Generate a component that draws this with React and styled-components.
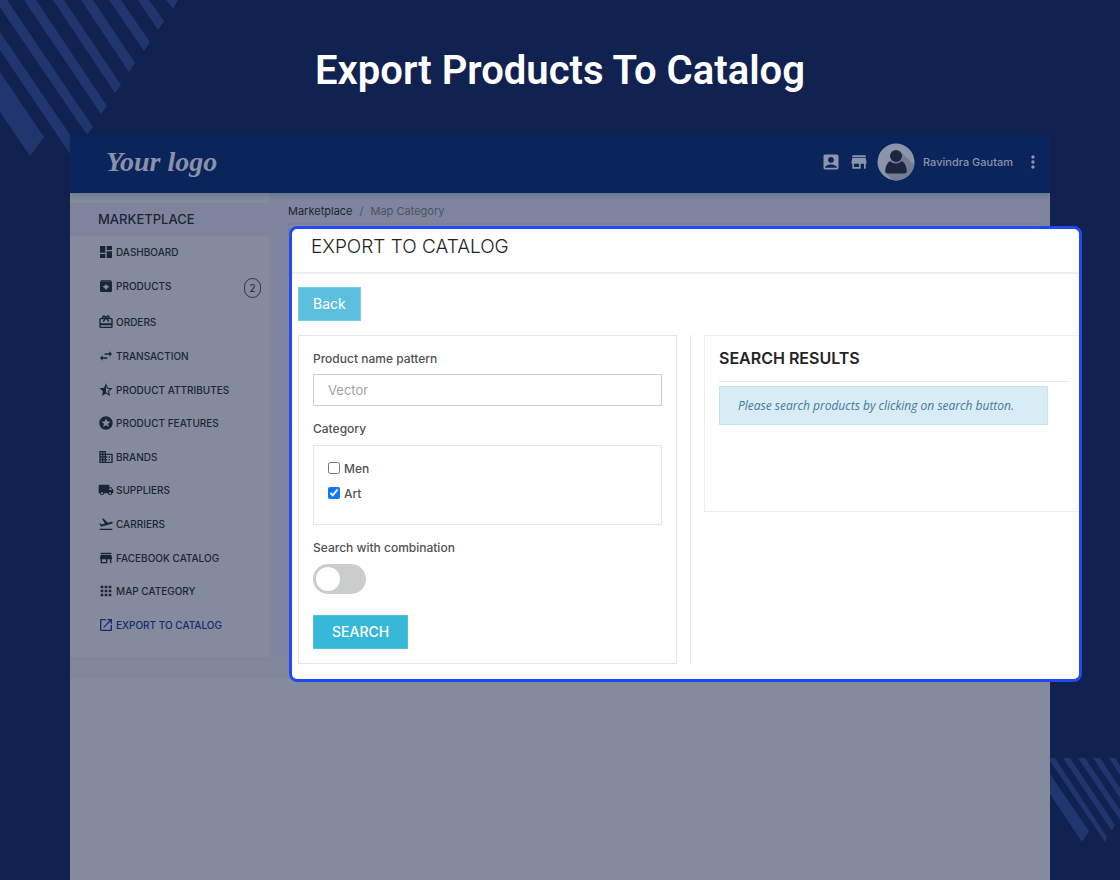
import React from 'react';
import styled, { createGlobalStyle, css } from 'styled-components';
import {
  MdAccountBox,
  MdApps,
  MdArchive,
  MdBusiness,
  MdCardGiftcard,
  MdDashboard,
  MdFlightTakeoff,
  MdLaunch,
  MdLocalShipping,
  MdMoreVert,
  MdStarHalf,
  MdStars,
  MdStore,
  MdSwapHoriz,
} from 'react-icons/md';

const GlobalStyle = createGlobalStyle`
  *, *::before, *::after { box-sizing: border-box; }
  body {
    margin: 0;
    background: #112150;
    color: #1c2438;
    font-family: Inter, "Open Sans", sans-serif;
  }
  button, input { font-family: inherit; }
`;

const Stage = styled.div`
  position: relative;
  display: flex;
  flex-direction: column;
  min-height: 100vh;
  padding: 0 70px;
  overflow: hidden;
`;

const TopStripes = styled.svg`
  position: absolute;
  top: 0;
  left: 0;
  fill: #21366e;
`;

const BottomStripes = styled.svg`
  position: absolute;
  right: 0;
  bottom: 38px;
  fill: #21366e;
`;

const PageTitle = styled.h1`
  margin: 0;
  padding: 47px 0 40px;
  color: #fff;
  font-family: Roboto, sans-serif;
  font-size: 40px;
  font-weight: 600;
  line-height: 48px;
  text-align: center;
`;

const Shop = styled.div`
  position: relative;
  flex: 1;
  display: flex;
  flex-direction: column;
  background: #838b9d;
`;

const Header = styled.header`
  position: relative;
  display: flex;
  align-items: center;
  height: 58px;
  padding: 0 7px 4px 36px;
  background: #0a245c;
  color: #8c95ac;
  box-shadow: 0 2px 6px rgba(20, 30, 60, 0.2);
`;

const Logo = styled.a`
  margin-right: auto;
  color: #8a92a8;
  font-family: "Liberation Serif", serif;
  font-size: 28px;
  font-style: italic;
  font-weight: 700;
  line-height: 40px;
  text-decoration: none;
`;

const HeaderLink = styled.a`
  display: flex;
  margin-right: 8px;
  color: inherit;
  font-size: 20px;
`;

const Account = styled.a`
  display: flex;
  align-items: center;
  gap: 8px;
  color: inherit;
  font-size: 11px;
  font-weight: 500;
  text-decoration: none;
`;

const MoreButton = styled.button`
  display: flex;
  margin-left: 10px;
  padding: 0;
  border: 0;
  background: none;
  color: inherit;
  font-size: 20px;
`;

const Columns = styled.div`
  display: grid;
  grid-template-columns: 199px minmax(0, 1fr);
  padding-bottom: 22px;
  background: linear-gradient(#7e859d 0 468px, #80879b 468px);
`;

const Sidebar = styled.nav`
  min-height: 464px;
  padding-top: 10px;
  background: #838b9d;
`;

const SidebarTitle = styled.h2`
  margin: 0;
  padding-left: 28px;
  background: #7d849c;
  font-size: 13px;
  font-weight: 500;
  line-height: 33px;
`;

const MenuList = styled.ul`
  display: flex;
  flex-direction: column;
  justify-content: space-between;
  min-height: 393px;
  margin: 6px 0 0;
  padding: 0 8px 0 28px;
  list-style: none;
`;

const MenuItem = styled.li`
  display: flex;
  justify-content: space-between;
  height: ${(p) => (p.$tall ? 23 : 20)}px;
`;

const MenuLink = styled.a`
  display: flex;
  align-items: center;
  gap: 2px;
  height: 20px;
  color: ${(p) => (p.$active ? '#142c6e' : '#1c2438')};
  font-size: 10px;
  font-weight: 500;
  line-height: 20px;
  text-decoration: none;
  white-space: nowrap;

  svg { font-size: 16px; }
`;

const Badge = styled.span`
  width: 17px;
  height: 20px;
  margin-top: 2px;
  border: 1px solid #2b3348;
  border-radius: 9px;
  font-size: 10px;
  line-height: 18px;
  text-align: center;
`;

const Content = styled.div`
  padding: 11px 6px 0 19px;
`;

const Breadcrumb = styled.nav`
  display: flex;
  gap: 7px;
  padding-bottom: 4px;
  color: #4b5268;
  font-size: 11px;
  line-height: 15px;

  a {
    color: #1c2438;
    text-decoration: none;
  }
`;

const CardBack = styled.div`
  height: 20px;
  border: 2px solid #7a8195;
  background: #838b9d;
`;

const Panel = styled.section`
  position: absolute;
  top: 91px;
  right: -32px;
  left: 219px;
  overflow: hidden;
  padding-bottom: 15px;
  border: 3px solid #2149f3;
  border-radius: 8px;
  background: #fff;
`;

const PanelTitle = styled.h2`
  margin: 0;
  padding: 5px 0 12px 19px;
  border-bottom: 2px solid #eee;
  color: #232425;
  font-size: 19px;
  font-weight: 300;
  line-height: 26px;
`;

const PanelBody = styled.div`
  padding: 13px 0 0 6px;
`;

const Button = styled.button`
  display: block;
  height: 34px;
  padding: 0 ${(p) => (p.$primary ? 18 : 14)}px 2px;
  border: 1px solid ${(p) => (p.$primary ? '#4cc0dc' : '#7acce4')};
  background: ${(p) => (p.$primary ? '#36b8d8' : '#5bc0de')};
  color: #fff;
  font-size: 14px;
  font-weight: ${(p) => (p.$primary ? 500 : 400)};
`;

const Split = styled.div`
  display: grid;
  grid-template-columns: minmax(0, 379fr) 1px minmax(0, 375fr);
  gap: 13px;
  margin-top: 14px;
`;

const outline = css`
  border: 1px solid #e4e5e5;
`;

const SearchForm = styled.form`
  ${outline}
  padding: 14px;
`;

const Divider = styled.div`
  background: #e4e5e5;
`;

const FieldLabel = styled.label`
  display: block;
  color: #505254;
  font-size: 12px;
  font-weight: 500;
  line-height: 18px;
`;

const TextInput = styled.input`
  display: block;
  width: 100%;
  height: 32px;
  margin: 6px 0 14px;
  padding: 0 14px;
  border: 1px solid #cfd0d1;
  color: #333;
  font-size: 13px;

  &::placeholder { color: #a0a2a4; }
`;

const CategoryBox = styled.fieldset`
  min-width: 0;
  margin: 0 0 14px;
  padding: 0;
  border: 0;

  legend {
    padding: 0;
    color: #505254;
    font-size: 12px;
    font-weight: 500;
    line-height: 18px;
  }
`;

const Options = styled.div`
  ${outline}
  height: 80px;
  margin-top: 7px;
  padding: 10px 14px;
`;

const Option = styled.label`
  display: flex;
  align-items: center;
  gap: 4px;
  height: 25px;
  color: #505254;
  font-size: 12px;
  font-weight: 500;

  input {
    width: 12px;
    height: 12px;
    margin: 0 0 2px;
    accent-color: #0a78ff;
  }
`;

const Toggle = styled.input`
  display: block;
  appearance: none;
  width: 53px;
  height: 30px;
  margin: 7px 0 21px;
  padding: 3px;
  border-radius: 15px;
  background: #cbcccc;

  &::before {
    content: '';
    display: block;
    width: 24px;
    height: 24px;
    border-radius: 50%;
    background: #fff;
  }

  &:checked { background: #36b8d8; }
  &:checked::before { margin-left: 23px; }
`;

const Results = styled.section`
  align-self: start;
  min-height: 177px;
  padding: 0 9px 0 14px;
  border: solid #ededed;
  border-width: 1px 0 1px 1px;
`;

const ResultsTitle = styled.h3`
  margin: 0 0 4px;
  padding: 10px 0 11px;
  border-bottom: 1px solid #e8e8e8;
  color: #232425;
  font-size: 16px;
  font-weight: 600;
  line-height: 24px;
`;

const Notice = styled.p`
  margin: 0 22px 0 0;
  padding: 0 18px;
  border: 1px solid #c4e4f1;
  background: #d9ecf6;
  color: #417b98;
  font-family: "Open Sans", sans-serif;
  font-size: 12px;
  font-style: italic;
  line-height: 37px;
  white-space: nowrap;
`;

const menu = [
  { label: 'DASHBOARD', Icon: MdDashboard },
  { label: 'PRODUCTS', Icon: MdArchive, count: 2 },
  { label: 'ORDERS', Icon: MdCardGiftcard },
  { label: 'TRANSACTION', Icon: MdSwapHoriz },
  { label: 'PRODUCT ATTRIBUTES', Icon: MdStarHalf },
  { label: 'PRODUCT FEATURES', Icon: MdStars },
  { label: 'BRANDS', Icon: MdBusiness },
  { label: 'SUPPLIERS', Icon: MdLocalShipping },
  { label: 'CARRIERS', Icon: MdFlightTakeoff },
  { label: 'FACEBOOK CATALOG', Icon: MdStore },
  { label: 'MAP CATEGORY', Icon: MdApps },
  { label: 'EXPORT TO CATALOG', Icon: MdLaunch, active: true },
];

function Avatar() {
  return (
    <svg width="38" height="38" viewBox="0 0 38 38" aria-hidden="true">
      <circle cx="19" cy="19" r="18.5" fill="#8c94a9" />
      <path d="M24 9L37.3 22A18.5 18.5 0 0 1 15 37L9 30Z" fill="#747c92" />
      <circle cx="19" cy="13" r="6" fill="#1c2640" />
      <path
        d="M13 18q6 5 12 0q4.500 3 4.800 10q0 2.500-2.500 2.500H10.700q-2.500 0-2.500-2.500q.3-7 4.800-10Z"
        fill="#1c2640"
      />
    </svg>
  );
}

export default function App() {
  return (
    <>
      <GlobalStyle />
      <Stage>
        <TopStripes width="180" height="160" viewBox="0 0 180 160" aria-hidden="true">
          <path d="M0 72L44 137L30 156L0 112Z" />
          <path d="M0 32L79 148L72 157L0 50Z" />
          <path d="M-5 0H7L93 127L87 135Z" />
          <path d="M24 0H36L107 106L101 114Z" />
          <path d="M53 0H64L121 85L115 93Z" />
          <path d="M81 0H93L135 63L129 72Z" />
          <path d="M109 0H121L150 42L144 51Z" />
          <path d="M138 0H149L164 21L158 30Z" />
          <path d="M166 0H178L173 9Z" />
        </TopStripes>
        <BottomStripes width="70" height="84" viewBox="0 0 70 84" aria-hidden="true">
          <path d="M0 16L39 73L32 84L0 36Z" />
          <path d="M-2 0H5L57 79L55 84Z" />
          <path d="M13 0H20L65 67L62 73Z" />
          <path d="M28 0H35L70 52V62Z" />
          <path d="M43 0H50L70 30V40Z" />
          <path d="M59 0H65L70 8V17Z" />
        </BottomStripes>

        <PageTitle>Export Products To Catalog</PageTitle>

        <Shop>
          <Header>
            <Logo href="#home">Your logo</Logo>
            <HeaderLink href="#profile" aria-label="Profile"><MdAccountBox /></HeaderLink>
            <HeaderLink href="#store" aria-label="Store"><MdStore /></HeaderLink>
            <Account href="#account">
              <Avatar />
              Ravindra Gautam
            </Account>
            <MoreButton type="button" aria-label="More"><MdMoreVert /></MoreButton>
          </Header>

          <Columns>
            <Sidebar>
              <SidebarTitle>MARKETPLACE</SidebarTitle>
              <MenuList>
                {menu.map(({ label, Icon, count, active }) => (
                  <MenuItem key={label} $tall={Boolean(count)}>
                    <MenuLink href="#menu" $active={active}>
                      <Icon />
                      {label}
                    </MenuLink>
                    {count && <Badge>{count}</Badge>}
                  </MenuItem>
                ))}
              </MenuList>
            </Sidebar>
            <Content>
              <Breadcrumb>
                <a href="#marketplace">Marketplace</a>
                <span>/</span>
                <span>Map Category</span>
              </Breadcrumb>
              <CardBack />
            </Content>
          </Columns>

          <Panel>
            <PanelTitle>EXPORT TO CATALOG</PanelTitle>
            <PanelBody>
              <Button type="button">Back</Button>
              <Split>
                <SearchForm onSubmit={(e) => e.preventDefault()}>
                  <FieldLabel htmlFor="pattern">Product name pattern</FieldLabel>
                  <TextInput id="pattern" type="text" placeholder="Vector" />
                  <CategoryBox>
                    <legend>Category</legend>
                    <Options>
                      <Option><input type="checkbox" />Men</Option>
                      <Option><input type="checkbox" defaultChecked />Art</Option>
                    </Options>
                  </CategoryBox>
                  <FieldLabel htmlFor="combination">Search with combination</FieldLabel>
                  <Toggle id="combination" type="checkbox" role="switch" />
                  <Button type="submit" $primary>SEARCH</Button>
                </SearchForm>
                <Divider />
                <Results>
                  <ResultsTitle>SEARCH RESULTS</ResultsTitle>
                  <Notice>Please search products by clicking on search button.</Notice>
                </Results>
              </Split>
            </PanelBody>
          </Panel>
        </Shop>
      </Stage>
    </>
  );
}
